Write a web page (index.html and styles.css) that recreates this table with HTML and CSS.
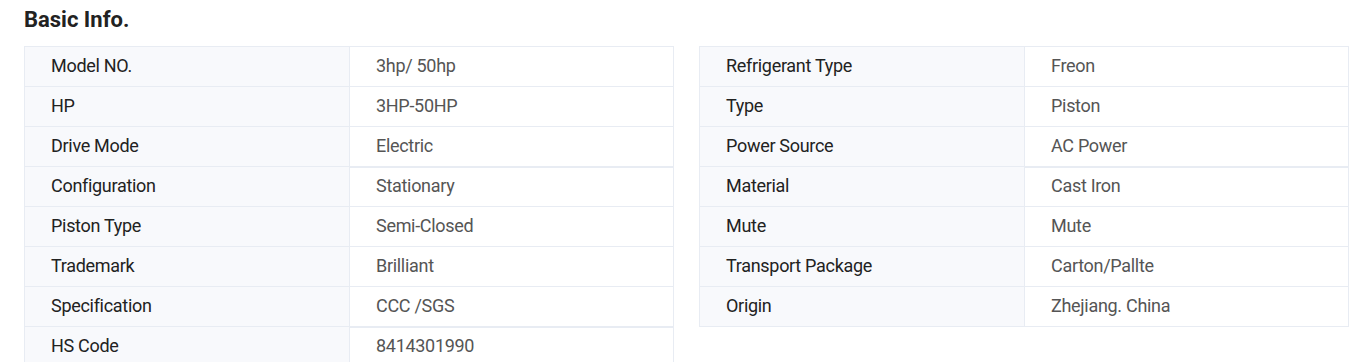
FILE: index.html
```html
<!DOCTYPE html>
<html>
<head>
<meta charset="utf-8">
<link rel="stylesheet" href="styles.css">
</head>
<body>
<div class="wrap">
  <h2 class="title">Basic Info.</h2>
  <div class="tables">
    <table class="info">
      <tr><td class="k">Model NO.</td><td class="v">3hp/ 50hp</td></tr>
      <tr><td class="k">HP</td><td class="v">3HP-50HP</td></tr>
      <tr><td class="k">Drive Mode</td><td class="v">Electric</td></tr>
      <tr class="grp"><td class="k">Configuration</td><td class="v">Stationary</td></tr>
      <tr><td class="k">Piston Type</td><td class="v">Semi-Closed</td></tr>
      <tr><td class="k">Trademark</td><td class="v">Brilliant</td></tr>
      <tr><td class="k">Specification</td><td class="v">CCC /SGS</td></tr>
      <tr class="grp"><td class="k">HS Code</td><td class="v">8414301990</td></tr>
    </table>
    <table class="info">
      <tr><td class="k">Refrigerant Type</td><td class="v">Freon</td></tr>
      <tr><td class="k">Type</td><td class="v">Piston</td></tr>
      <tr><td class="k">Power Source</td><td class="v">AC Power</td></tr>
      <tr class="grp"><td class="k">Material</td><td class="v">Cast Iron</td></tr>
      <tr><td class="k">Mute</td><td class="v">Mute</td></tr>
      <tr><td class="k">Transport Package</td><td class="v">Carton/Pallte</td></tr>
      <tr><td class="k">Origin</td><td class="v">Zhejiang. China</td></tr>
    </table>
  </div>
</div>
</body>
</html>
```
FILE: styles.css
```css
* { box-sizing: border-box; }
body {
  margin: 0;
  background: #fff;
  font-family: Roboto, "Liberation Sans", Arial, sans-serif;
}
.wrap {
  padding: 7px 11px 0 24px;
}
.title {
  margin: 0 0 13px 0;
  font-size: 22px;
  line-height: 26px;
  font-weight: 700;
  color: #222;
}
.tables {
  display: flex;
  gap: 25px;
  align-items: flex-start;
}
.info {
  width: 650px;
  border-collapse: collapse;
  table-layout: fixed;
}
.info td {
  border: 1px solid #e8ecf3;
  height: 40px;
  padding: 0 0 1px 26px;
  font-size: 18px;
  letter-spacing: -0.3px;
  line-height: 20px;
  vertical-align: middle;
}
.info td.k {
  width: 325px;
  background: #f8f9fc;
  color: #222;
}
.info td.v {
  color: #555;
  background: #fff;
}
.info tr.grp td.v {
  box-shadow: inset 0 1px 0 #e8ecf3;
}
```
